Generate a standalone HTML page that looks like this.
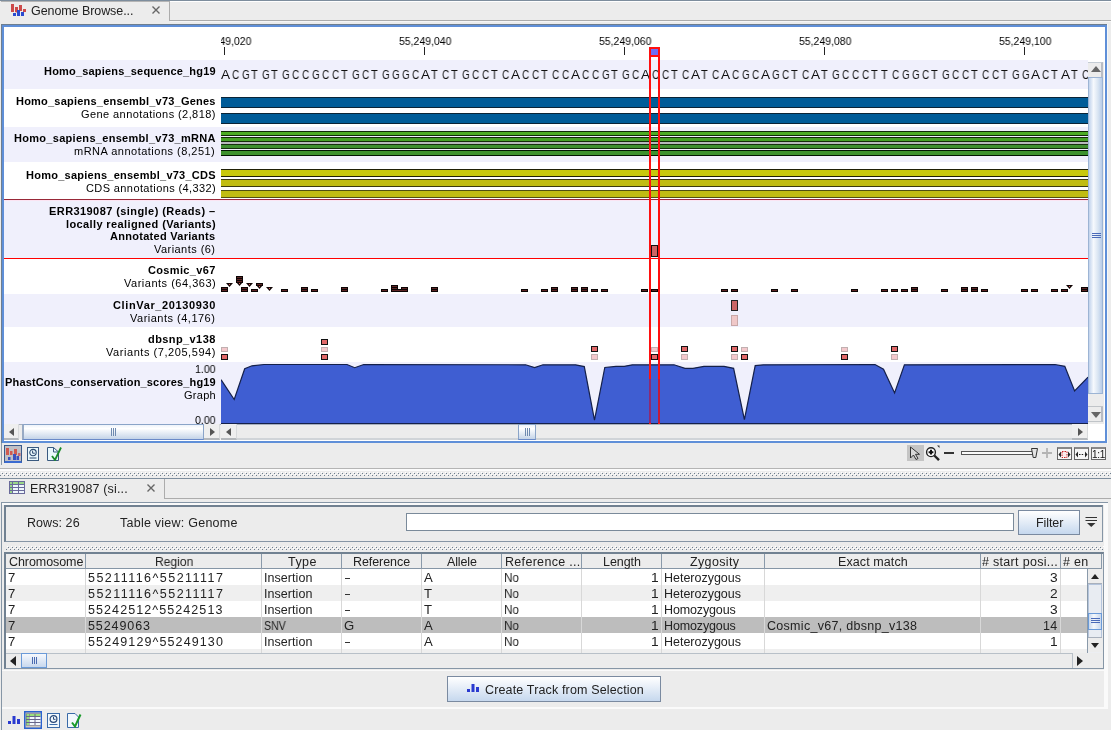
<!DOCTYPE html><html><head><meta charset="utf-8"><style>
html,body{margin:0;padding:0;}
body{width:1111px;height:730px;overflow:hidden;position:relative;background:#ececec;font-family:"Liberation Sans",sans-serif;}
div{position:absolute;box-sizing:border-box;}
.t{white-space:pre;line-height:1;will-change:transform;}
svg{position:absolute;}
</style></head><body>
<div style="left:0px;top:0px;width:1111px;height:1px;background:#7d8d9d;"></div>
<div style="left:1px;top:1px;width:168px;height:1px;background:#b4b4b4;"></div>
<div style="left:169px;top:1px;width:1px;height:20px;background:#acacac;"></div>
<div style="left:170px;top:1px;width:941px;height:1px;background:#ffffff;"></div>
<div style="left:170px;top:20px;width:941px;height:1px;background:#acacac;"></div>
<div style="left:170px;top:21px;width:941px;height:1px;background:#f6f6f6;"></div>
<svg style="left:11px;top:4px" width="15" height="12" viewBox="0 0 15 12">
<rect x="0" y="0" width="3" height="8" fill="#cc4a4a"/>
<path d="M4 3H7V8L5.5 8.5L4 8Z" fill="#cc4a4a"/>
<rect x="8" y="1" width="3" height="6" fill="#cc4a4a"/>
<rect x="12" y="5" width="3" height="3" fill="#cc4a4a"/>
<rect x="2" y="9" width="3" height="3" fill="#2a4ad0"/>
<rect x="6" y="6" width="3" height="6" fill="#2a4ad0"/>
<rect x="10" y="8" width="3" height="4" fill="#2a4ad0"/>
</svg>
<div class="t" style="left:30.8px;top:5.12px;font-size:12.5px;font-weight:normal;color:#222;letter-spacing:-0.074px;">Genome Browse...</div>
<svg style="left:151px;top:5px" width="10" height="10" viewBox="0 0 10 10"><path d="M1.5 1.5L8.5 8.5M8.5 1.5L1.5 8.5" stroke="#666" stroke-width="1.4"/></svg>
<div style="left:1px;top:24px;width:1106px;height:419px;background:#5f8fd8;border-top:1px solid #6e7e8e;border-left:1px solid #6e7e8e;"></div>
<div style="left:4px;top:27px;width:1101px;height:414px;background:#ffffff;"></div>
<div style="left:1107px;top:24px;width:1px;height:420px;background:#f4f8fa;"></div>
<div style="left:4px;top:60px;width:1084px;height:29px;background:#f0f0fc;"></div>
<div style="left:4px;top:89px;width:1084px;height:38px;background:#fff;"></div>
<div style="left:4px;top:127px;width:1084px;height:35px;background:#f0f0fc;"></div>
<div style="left:4px;top:162px;width:1084px;height:37px;background:#fff;"></div>
<div style="left:4px;top:199px;width:1084px;height:60px;background:#f0f0fc;"></div>
<div style="left:4px;top:259px;width:1084px;height:35px;background:#fff;"></div>
<div style="left:4px;top:294px;width:1084px;height:33px;background:#f0f0fc;"></div>
<div style="left:4px;top:327px;width:1084px;height:35px;background:#fff;"></div>
<div style="left:4px;top:362px;width:1084px;height:62px;background:#f0f0fc;"></div>
<div style="left:4px;top:199px;width:1084px;height:1px;background:#982838;"></div>
<div style="left:4px;top:200px;width:1084px;height:1px;background:#fbe4f2;"></div>
<div style="left:4px;top:258px;width:1084px;height:1px;background:#ff0000;"></div>
<div class="t" style="left:43.6px;top:66.49px;font-size:11.0px;font-weight:bold;color:#000;letter-spacing:0.188px;">Homo_sapiens_sequence_hg19</div>
<div class="t" style="left:15.8px;top:95.69px;font-size:11.0px;font-weight:bold;color:#000;letter-spacing:0.213px;">Homo_sapiens_ensembl_v73_Genes</div>
<div class="t" style="left:80.8px;top:109.09px;font-size:11.0px;font-weight:normal;color:#000;letter-spacing:0.419px;">Gene annotations (2,818)</div>
<div class="t" style="left:13.7px;top:133.29px;font-size:11.0px;font-weight:bold;color:#000;letter-spacing:0.296px;">Homo_sapiens_ensembl_v73_mRNA</div>
<div class="t" style="left:74.4px;top:146.39px;font-size:11.0px;font-weight:normal;color:#000;letter-spacing:0.485px;">mRNA annotations (8,251)</div>
<div class="t" style="left:25.6px;top:170.29px;font-size:11.0px;font-weight:bold;color:#000;letter-spacing:0.251px;">Homo_sapiens_ensembl_v73_CDS</div>
<div class="t" style="left:85.5px;top:183.39px;font-size:11.0px;font-weight:normal;color:#000;letter-spacing:0.392px;">CDS annotations (4,332)</div>
<div class="t" style="left:49.1px;top:206.39px;font-size:11.0px;font-weight:bold;color:#000;letter-spacing:0.423px;">ERR319087 (single) (Reads) –</div>
<div class="t" style="left:65.5px;top:218.99px;font-size:11.0px;font-weight:bold;color:#000;letter-spacing:0.382px;">locally realigned (Variants)</div>
<div class="t" style="left:110.1px;top:231.29px;font-size:11.0px;font-weight:bold;color:#000;letter-spacing:0.285px;">Annotated Variants</div>
<div class="t" style="left:154.2px;top:244.09px;font-size:11.0px;font-weight:normal;color:#000;letter-spacing:0.450px;">Variants (6)</div>
<div class="t" style="left:147.9px;top:265.29px;font-size:11.0px;font-weight:bold;color:#000;letter-spacing:0.342px;">Cosmic_v67</div>
<div class="t" style="left:123.5px;top:277.89px;font-size:11.0px;font-weight:normal;color:#000;letter-spacing:0.508px;">Variants (64,363)</div>
<div class="t" style="left:112.7px;top:300.49px;font-size:11.0px;font-weight:bold;color:#000;letter-spacing:0.635px;">ClinVar_20130930</div>
<div class="t" style="left:130.3px;top:313.39px;font-size:11.0px;font-weight:normal;color:#000;letter-spacing:0.496px;">Variants (4,176)</div>
<div class="t" style="left:147.9px;top:333.99px;font-size:11.0px;font-weight:bold;color:#000;letter-spacing:0.412px;">dbsnp_v138</div>
<div class="t" style="left:105.8px;top:347.09px;font-size:11.0px;font-weight:normal;color:#000;letter-spacing:0.555px;">Variants (7,205,594)</div>
<div class="t" style="left:194.6px;top:364.29px;font-size:11.0px;font-weight:normal;color:#000;transform:scaleX(0.9616);transform-origin:0 0;">1.00</div>
<div class="t" style="left:4.5px;top:377.39px;font-size:11.0px;font-weight:bold;color:#000;letter-spacing:0.160px;">PhastCons_conservation_scores_hg19</div>
<div class="t" style="left:183.5px;top:389.99px;font-size:11.0px;font-weight:normal;color:#000;letter-spacing:0.280px;">Graph</div>
<div class="t" style="left:194.6px;top:414.69px;font-size:11.0px;font-weight:normal;color:#000;transform:scaleX(0.9616);transform-origin:0 0;">0.00</div>
<div style="left:221px;top:27px;width:867px;height:33px;overflow:hidden">
<div class="t" style="left:-22.5px;top:9.29px;font-size:11.0px;font-weight:normal;color:#000;transform:scaleX(0.9516);transform-origin:0 0;">55,249,020</div>
<div style="left:3px;top:20px;width:1px;height:8px;background:#222"></div>
<div class="t" style="left:177.5px;top:9.29px;font-size:11.0px;font-weight:normal;color:#000;transform:scaleX(0.9516);transform-origin:0 0;">55,249,040</div>
<div style="left:203px;top:20px;width:1px;height:8px;background:#222"></div>
<div class="t" style="left:377.5px;top:9.29px;font-size:11.0px;font-weight:normal;color:#000;transform:scaleX(0.9516);transform-origin:0 0;">55,249,060</div>
<div style="left:403px;top:20px;width:1px;height:8px;background:#222"></div>
<div class="t" style="left:577.5px;top:9.29px;font-size:11.0px;font-weight:normal;color:#000;transform:scaleX(0.9516);transform-origin:0 0;">55,249,080</div>
<div style="left:603px;top:20px;width:1px;height:8px;background:#222"></div>
<div class="t" style="left:777.5px;top:9.29px;font-size:11.0px;font-weight:normal;color:#000;transform:scaleX(0.9516);transform-origin:0 0;">55,249,100</div>
<div style="left:803px;top:20px;width:1px;height:8px;background:#222"></div>
</div>
<div style="left:221px;top:60px;width:867px;height:29px;overflow:hidden">
<div class="t" style="left:0.2px;top:9.33px;font-size:12.6px;color:#111;transform:scaleX(1.08);transform-origin:0 0">A</div>
<div class="t" style="left:10.9px;top:9.33px;font-size:12.6px;color:#111;transform:scaleX(0.8);transform-origin:0 0">C</div>
<div class="t" style="left:20.9px;top:9.33px;font-size:12.6px;color:#111;transform:scaleX(0.79);transform-origin:0 0">G</div>
<div class="t" style="left:30.0px;top:9.33px;font-size:12.6px;color:#111;transform:scaleX(0.88);transform-origin:0 0">T</div>
<div class="t" style="left:40.9px;top:9.33px;font-size:12.6px;color:#111;transform:scaleX(0.79);transform-origin:0 0">G</div>
<div class="t" style="left:50.0px;top:9.33px;font-size:12.6px;color:#111;transform:scaleX(0.88);transform-origin:0 0">T</div>
<div class="t" style="left:60.9px;top:9.33px;font-size:12.6px;color:#111;transform:scaleX(0.79);transform-origin:0 0">G</div>
<div class="t" style="left:70.9px;top:9.33px;font-size:12.6px;color:#111;transform:scaleX(0.8);transform-origin:0 0">C</div>
<div class="t" style="left:80.9px;top:9.33px;font-size:12.6px;color:#111;transform:scaleX(0.8);transform-origin:0 0">C</div>
<div class="t" style="left:90.9px;top:9.33px;font-size:12.6px;color:#111;transform:scaleX(0.79);transform-origin:0 0">G</div>
<div class="t" style="left:100.9px;top:9.33px;font-size:12.6px;color:#111;transform:scaleX(0.8);transform-origin:0 0">C</div>
<div class="t" style="left:110.9px;top:9.33px;font-size:12.6px;color:#111;transform:scaleX(0.8);transform-origin:0 0">C</div>
<div class="t" style="left:120.0px;top:9.33px;font-size:12.6px;color:#111;transform:scaleX(0.88);transform-origin:0 0">T</div>
<div class="t" style="left:130.9px;top:9.33px;font-size:12.6px;color:#111;transform:scaleX(0.79);transform-origin:0 0">G</div>
<div class="t" style="left:140.9px;top:9.33px;font-size:12.6px;color:#111;transform:scaleX(0.8);transform-origin:0 0">C</div>
<div class="t" style="left:150.0px;top:9.33px;font-size:12.6px;color:#111;transform:scaleX(0.88);transform-origin:0 0">T</div>
<div class="t" style="left:160.9px;top:9.33px;font-size:12.6px;color:#111;transform:scaleX(0.79);transform-origin:0 0">G</div>
<div class="t" style="left:170.9px;top:9.33px;font-size:12.6px;color:#111;transform:scaleX(0.79);transform-origin:0 0">G</div>
<div class="t" style="left:180.9px;top:9.33px;font-size:12.6px;color:#111;transform:scaleX(0.79);transform-origin:0 0">G</div>
<div class="t" style="left:190.9px;top:9.33px;font-size:12.6px;color:#111;transform:scaleX(0.8);transform-origin:0 0">C</div>
<div class="t" style="left:200.2px;top:9.33px;font-size:12.6px;color:#111;transform:scaleX(1.08);transform-origin:0 0">A</div>
<div class="t" style="left:210.0px;top:9.33px;font-size:12.6px;color:#111;transform:scaleX(0.88);transform-origin:0 0">T</div>
<div class="t" style="left:220.9px;top:9.33px;font-size:12.6px;color:#111;transform:scaleX(0.8);transform-origin:0 0">C</div>
<div class="t" style="left:230.0px;top:9.33px;font-size:12.6px;color:#111;transform:scaleX(0.88);transform-origin:0 0">T</div>
<div class="t" style="left:240.9px;top:9.33px;font-size:12.6px;color:#111;transform:scaleX(0.79);transform-origin:0 0">G</div>
<div class="t" style="left:250.9px;top:9.33px;font-size:12.6px;color:#111;transform:scaleX(0.8);transform-origin:0 0">C</div>
<div class="t" style="left:260.9px;top:9.33px;font-size:12.6px;color:#111;transform:scaleX(0.8);transform-origin:0 0">C</div>
<div class="t" style="left:270.0px;top:9.33px;font-size:12.6px;color:#111;transform:scaleX(0.88);transform-origin:0 0">T</div>
<div class="t" style="left:280.9px;top:9.33px;font-size:12.6px;color:#111;transform:scaleX(0.8);transform-origin:0 0">C</div>
<div class="t" style="left:290.2px;top:9.33px;font-size:12.6px;color:#111;transform:scaleX(1.08);transform-origin:0 0">A</div>
<div class="t" style="left:300.9px;top:9.33px;font-size:12.6px;color:#111;transform:scaleX(0.8);transform-origin:0 0">C</div>
<div class="t" style="left:310.9px;top:9.33px;font-size:12.6px;color:#111;transform:scaleX(0.8);transform-origin:0 0">C</div>
<div class="t" style="left:320.0px;top:9.33px;font-size:12.6px;color:#111;transform:scaleX(0.88);transform-origin:0 0">T</div>
<div class="t" style="left:330.9px;top:9.33px;font-size:12.6px;color:#111;transform:scaleX(0.8);transform-origin:0 0">C</div>
<div class="t" style="left:340.9px;top:9.33px;font-size:12.6px;color:#111;transform:scaleX(0.8);transform-origin:0 0">C</div>
<div class="t" style="left:350.2px;top:9.33px;font-size:12.6px;color:#111;transform:scaleX(1.08);transform-origin:0 0">A</div>
<div class="t" style="left:360.9px;top:9.33px;font-size:12.6px;color:#111;transform:scaleX(0.8);transform-origin:0 0">C</div>
<div class="t" style="left:370.9px;top:9.33px;font-size:12.6px;color:#111;transform:scaleX(0.8);transform-origin:0 0">C</div>
<div class="t" style="left:380.9px;top:9.33px;font-size:12.6px;color:#111;transform:scaleX(0.79);transform-origin:0 0">G</div>
<div class="t" style="left:390.0px;top:9.33px;font-size:12.6px;color:#111;transform:scaleX(0.88);transform-origin:0 0">T</div>
<div class="t" style="left:400.9px;top:9.33px;font-size:12.6px;color:#111;transform:scaleX(0.79);transform-origin:0 0">G</div>
<div class="t" style="left:410.9px;top:9.33px;font-size:12.6px;color:#111;transform:scaleX(0.8);transform-origin:0 0">C</div>
<div class="t" style="left:420.2px;top:9.33px;font-size:12.6px;color:#111;transform:scaleX(1.08);transform-origin:0 0">A</div>
<div class="t" style="left:430.9px;top:9.33px;font-size:12.6px;color:#111;transform:scaleX(0.8);transform-origin:0 0">C</div>
<div class="t" style="left:440.9px;top:9.33px;font-size:12.6px;color:#111;transform:scaleX(0.8);transform-origin:0 0">C</div>
<div class="t" style="left:450.0px;top:9.33px;font-size:12.6px;color:#111;transform:scaleX(0.88);transform-origin:0 0">T</div>
<div class="t" style="left:460.9px;top:9.33px;font-size:12.6px;color:#111;transform:scaleX(0.8);transform-origin:0 0">C</div>
<div class="t" style="left:470.2px;top:9.33px;font-size:12.6px;color:#111;transform:scaleX(1.08);transform-origin:0 0">A</div>
<div class="t" style="left:480.0px;top:9.33px;font-size:12.6px;color:#111;transform:scaleX(0.88);transform-origin:0 0">T</div>
<div class="t" style="left:490.9px;top:9.33px;font-size:12.6px;color:#111;transform:scaleX(0.8);transform-origin:0 0">C</div>
<div class="t" style="left:500.2px;top:9.33px;font-size:12.6px;color:#111;transform:scaleX(1.08);transform-origin:0 0">A</div>
<div class="t" style="left:510.9px;top:9.33px;font-size:12.6px;color:#111;transform:scaleX(0.8);transform-origin:0 0">C</div>
<div class="t" style="left:520.9px;top:9.33px;font-size:12.6px;color:#111;transform:scaleX(0.79);transform-origin:0 0">G</div>
<div class="t" style="left:530.9px;top:9.33px;font-size:12.6px;color:#111;transform:scaleX(0.8);transform-origin:0 0">C</div>
<div class="t" style="left:540.2px;top:9.33px;font-size:12.6px;color:#111;transform:scaleX(1.08);transform-origin:0 0">A</div>
<div class="t" style="left:550.9px;top:9.33px;font-size:12.6px;color:#111;transform:scaleX(0.79);transform-origin:0 0">G</div>
<div class="t" style="left:560.9px;top:9.33px;font-size:12.6px;color:#111;transform:scaleX(0.8);transform-origin:0 0">C</div>
<div class="t" style="left:570.0px;top:9.33px;font-size:12.6px;color:#111;transform:scaleX(0.88);transform-origin:0 0">T</div>
<div class="t" style="left:580.9px;top:9.33px;font-size:12.6px;color:#111;transform:scaleX(0.8);transform-origin:0 0">C</div>
<div class="t" style="left:590.2px;top:9.33px;font-size:12.6px;color:#111;transform:scaleX(1.08);transform-origin:0 0">A</div>
<div class="t" style="left:600.0px;top:9.33px;font-size:12.6px;color:#111;transform:scaleX(0.88);transform-origin:0 0">T</div>
<div class="t" style="left:610.9px;top:9.33px;font-size:12.6px;color:#111;transform:scaleX(0.79);transform-origin:0 0">G</div>
<div class="t" style="left:620.9px;top:9.33px;font-size:12.6px;color:#111;transform:scaleX(0.8);transform-origin:0 0">C</div>
<div class="t" style="left:630.9px;top:9.33px;font-size:12.6px;color:#111;transform:scaleX(0.8);transform-origin:0 0">C</div>
<div class="t" style="left:640.9px;top:9.33px;font-size:12.6px;color:#111;transform:scaleX(0.8);transform-origin:0 0">C</div>
<div class="t" style="left:650.0px;top:9.33px;font-size:12.6px;color:#111;transform:scaleX(0.88);transform-origin:0 0">T</div>
<div class="t" style="left:660.0px;top:9.33px;font-size:12.6px;color:#111;transform:scaleX(0.88);transform-origin:0 0">T</div>
<div class="t" style="left:670.9px;top:9.33px;font-size:12.6px;color:#111;transform:scaleX(0.8);transform-origin:0 0">C</div>
<div class="t" style="left:680.9px;top:9.33px;font-size:12.6px;color:#111;transform:scaleX(0.79);transform-origin:0 0">G</div>
<div class="t" style="left:690.9px;top:9.33px;font-size:12.6px;color:#111;transform:scaleX(0.79);transform-origin:0 0">G</div>
<div class="t" style="left:700.9px;top:9.33px;font-size:12.6px;color:#111;transform:scaleX(0.8);transform-origin:0 0">C</div>
<div class="t" style="left:710.0px;top:9.33px;font-size:12.6px;color:#111;transform:scaleX(0.88);transform-origin:0 0">T</div>
<div class="t" style="left:720.9px;top:9.33px;font-size:12.6px;color:#111;transform:scaleX(0.79);transform-origin:0 0">G</div>
<div class="t" style="left:730.9px;top:9.33px;font-size:12.6px;color:#111;transform:scaleX(0.8);transform-origin:0 0">C</div>
<div class="t" style="left:740.9px;top:9.33px;font-size:12.6px;color:#111;transform:scaleX(0.8);transform-origin:0 0">C</div>
<div class="t" style="left:750.0px;top:9.33px;font-size:12.6px;color:#111;transform:scaleX(0.88);transform-origin:0 0">T</div>
<div class="t" style="left:760.9px;top:9.33px;font-size:12.6px;color:#111;transform:scaleX(0.8);transform-origin:0 0">C</div>
<div class="t" style="left:770.9px;top:9.33px;font-size:12.6px;color:#111;transform:scaleX(0.8);transform-origin:0 0">C</div>
<div class="t" style="left:780.0px;top:9.33px;font-size:12.6px;color:#111;transform:scaleX(0.88);transform-origin:0 0">T</div>
<div class="t" style="left:790.9px;top:9.33px;font-size:12.6px;color:#111;transform:scaleX(0.79);transform-origin:0 0">G</div>
<div class="t" style="left:800.9px;top:9.33px;font-size:12.6px;color:#111;transform:scaleX(0.79);transform-origin:0 0">G</div>
<div class="t" style="left:810.2px;top:9.33px;font-size:12.6px;color:#111;transform:scaleX(1.08);transform-origin:0 0">A</div>
<div class="t" style="left:820.9px;top:9.33px;font-size:12.6px;color:#111;transform:scaleX(0.8);transform-origin:0 0">C</div>
<div class="t" style="left:830.0px;top:9.33px;font-size:12.6px;color:#111;transform:scaleX(0.88);transform-origin:0 0">T</div>
<div class="t" style="left:840.2px;top:9.33px;font-size:12.6px;color:#111;transform:scaleX(1.08);transform-origin:0 0">A</div>
<div class="t" style="left:850.0px;top:9.33px;font-size:12.6px;color:#111;transform:scaleX(0.88);transform-origin:0 0">T</div>
<div class="t" style="left:860.9px;top:9.33px;font-size:12.6px;color:#111;transform:scaleX(0.8);transform-origin:0 0">C</div>
</div>
<div style="left:221px;top:97px;width:867px;height:11px;background:#005c98;border-top:1px solid #0b2436;border-bottom:1px solid #0b2436;"></div>
<div style="left:221px;top:113px;width:867px;height:11px;background:#005c98;border-top:1px solid #0b2436;border-bottom:1px solid #0b2436;"></div>
<div style="left:221px;top:131px;width:867px;height:5px;background:#4cac24;border-top:1px solid #102a08;border-bottom:1px solid #102a08;"></div>
<div style="left:221px;top:137px;width:867px;height:5px;background:#46a026;border-top:1px solid #142a0a;border-bottom:1px solid #142a0a;"></div>
<div style="left:221px;top:142px;width:867px;height:2px;background:#b8b8bc;"></div>
<div style="left:221px;top:144px;width:867px;height:5px;background:#3e8e2e;border-top:1px solid #16300e;border-bottom:1px solid #16300e;"></div>
<div style="left:221px;top:150px;width:867px;height:6px;background:#3e922e;border-top:1px solid #021602;border-bottom:1px solid #021602;"></div>
<div style="left:221px;top:169px;width:867px;height:8px;background:#c8c80c;border-top:1px solid #202006;border-bottom:1px solid #202006;"></div>
<div style="left:221px;top:179px;width:867px;height:8px;background:#c0bc12;border-top:1px solid #3a3a10;border-bottom:1px solid #3a3a10;"></div>
<div style="left:221px;top:190px;width:867px;height:8px;background:#c0bc12;border-top:1px solid #505010;border-bottom:1px solid #505010;"></div>
<div style="left:651px;top:245px;width:7px;height:12px;background:#cc6464;border:1px solid #111;"></div>
<div style="left:221px;top:287px;width:7px;height:3px;background:#5e2424;border:1px solid #0a0404;"></div>
<div style="left:221px;top:289px;width:7px;height:3px;background:#5e2424;border:1px solid #0a0404;"></div>
<div style="left:241px;top:287px;width:7px;height:3px;background:#5e2424;border:1px solid #0a0404;"></div>
<div style="left:241px;top:289px;width:7px;height:3px;background:#5e2424;border:1px solid #0a0404;"></div>
<div style="left:301px;top:287px;width:7px;height:3px;background:#5e2424;border:1px solid #0a0404;"></div>
<div style="left:301px;top:289px;width:7px;height:3px;background:#5e2424;border:1px solid #0a0404;"></div>
<div style="left:341px;top:287px;width:7px;height:3px;background:#5e2424;border:1px solid #0a0404;"></div>
<div style="left:341px;top:289px;width:7px;height:3px;background:#5e2424;border:1px solid #0a0404;"></div>
<div style="left:431px;top:287px;width:7px;height:3px;background:#5e2424;border:1px solid #0a0404;"></div>
<div style="left:431px;top:289px;width:7px;height:3px;background:#5e2424;border:1px solid #0a0404;"></div>
<div style="left:551px;top:287px;width:7px;height:3px;background:#5e2424;border:1px solid #0a0404;"></div>
<div style="left:551px;top:289px;width:7px;height:3px;background:#5e2424;border:1px solid #0a0404;"></div>
<div style="left:571px;top:287px;width:7px;height:3px;background:#5e2424;border:1px solid #0a0404;"></div>
<div style="left:571px;top:289px;width:7px;height:3px;background:#5e2424;border:1px solid #0a0404;"></div>
<div style="left:581px;top:287px;width:7px;height:3px;background:#5e2424;border:1px solid #0a0404;"></div>
<div style="left:581px;top:289px;width:7px;height:3px;background:#5e2424;border:1px solid #0a0404;"></div>
<div style="left:911px;top:287px;width:7px;height:3px;background:#5e2424;border:1px solid #0a0404;"></div>
<div style="left:911px;top:289px;width:7px;height:3px;background:#5e2424;border:1px solid #0a0404;"></div>
<div style="left:961px;top:287px;width:7px;height:3px;background:#5e2424;border:1px solid #0a0404;"></div>
<div style="left:961px;top:289px;width:7px;height:3px;background:#5e2424;border:1px solid #0a0404;"></div>
<div style="left:971px;top:287px;width:7px;height:3px;background:#5e2424;border:1px solid #0a0404;"></div>
<div style="left:971px;top:289px;width:7px;height:3px;background:#5e2424;border:1px solid #0a0404;"></div>
<div style="left:1081px;top:287px;width:7px;height:3px;background:#5e2424;border:1px solid #0a0404;"></div>
<div style="left:1081px;top:289px;width:7px;height:3px;background:#5e2424;border:1px solid #0a0404;"></div>
<div style="left:251px;top:289px;width:7px;height:3px;background:#5e2424;border:1px solid #0a0404;"></div>
<div style="left:281px;top:289px;width:7px;height:3px;background:#5e2424;border:1px solid #0a0404;"></div>
<div style="left:311px;top:289px;width:7px;height:3px;background:#5e2424;border:1px solid #0a0404;"></div>
<div style="left:381px;top:289px;width:7px;height:3px;background:#5e2424;border:1px solid #0a0404;"></div>
<div style="left:521px;top:289px;width:7px;height:3px;background:#5e2424;border:1px solid #0a0404;"></div>
<div style="left:541px;top:289px;width:7px;height:3px;background:#5e2424;border:1px solid #0a0404;"></div>
<div style="left:591px;top:289px;width:7px;height:3px;background:#5e2424;border:1px solid #0a0404;"></div>
<div style="left:601px;top:289px;width:7px;height:3px;background:#5e2424;border:1px solid #0a0404;"></div>
<div style="left:641px;top:289px;width:7px;height:3px;background:#5e2424;border:1px solid #0a0404;"></div>
<div style="left:651px;top:289px;width:7px;height:3px;background:#5e2424;border:1px solid #0a0404;"></div>
<div style="left:721px;top:289px;width:7px;height:3px;background:#5e2424;border:1px solid #0a0404;"></div>
<div style="left:731px;top:289px;width:7px;height:3px;background:#5e2424;border:1px solid #0a0404;"></div>
<div style="left:771px;top:289px;width:7px;height:3px;background:#5e2424;border:1px solid #0a0404;"></div>
<div style="left:791px;top:289px;width:7px;height:3px;background:#5e2424;border:1px solid #0a0404;"></div>
<div style="left:851px;top:289px;width:7px;height:3px;background:#5e2424;border:1px solid #0a0404;"></div>
<div style="left:881px;top:289px;width:7px;height:3px;background:#5e2424;border:1px solid #0a0404;"></div>
<div style="left:891px;top:289px;width:7px;height:3px;background:#5e2424;border:1px solid #0a0404;"></div>
<div style="left:901px;top:289px;width:7px;height:3px;background:#5e2424;border:1px solid #0a0404;"></div>
<div style="left:941px;top:289px;width:7px;height:3px;background:#5e2424;border:1px solid #0a0404;"></div>
<div style="left:981px;top:289px;width:7px;height:3px;background:#5e2424;border:1px solid #0a0404;"></div>
<div style="left:1021px;top:289px;width:7px;height:3px;background:#5e2424;border:1px solid #0a0404;"></div>
<div style="left:1031px;top:289px;width:7px;height:3px;background:#5e2424;border:1px solid #0a0404;"></div>
<div style="left:1051px;top:289px;width:7px;height:3px;background:#5e2424;border:1px solid #0a0404;"></div>
<div style="left:1061px;top:289px;width:7px;height:3px;background:#5e2424;border:1px solid #0a0404;"></div>
<div style="left:391px;top:285px;width:7px;height:3px;background:#5e2424;border:1px solid #0a0404;"></div>
<div style="left:391px;top:287px;width:7px;height:3px;background:#5e2424;border:1px solid #0a0404;"></div>
<div style="left:391px;top:289px;width:17px;height:3px;background:#5e2424;border:1px solid #0a0404;"></div>
<div style="left:401px;top:287px;width:7px;height:3px;background:#5e2424;border:1px solid #0a0404;"></div>
<div style="left:236px;top:276px;width:7px;height:3px;background:#5e2424;border:1px solid #0a0404;"></div>
<div style="left:236px;top:278px;width:7px;height:3px;background:#5e2424;border:1px solid #0a0404;"></div>
<div style="left:236px;top:280px;width:7px;height:3px;background:#5e2424;border:1px solid #0a0404;"></div>
<svg style="left:236px;top:282px" width="7" height="4" viewBox="0 0 7 4"><path d="M0 0H7L3.5 4Z" fill="#120606"/><rect x="3" y="1" width="1" height="1" fill="#d05858"/></svg>
<div style="left:256px;top:283px;width:7px;height:3px;background:#5e2424;border:1px solid #0a0404;"></div>
<svg style="left:256px;top:285px" width="7" height="4" viewBox="0 0 7 4"><path d="M0 0H7L3.5 4Z" fill="#120606"/><rect x="3" y="1" width="1" height="1" fill="#d05858"/></svg>
<svg style="left:226px;top:283px" width="7" height="4" viewBox="0 0 7 4"><path d="M0 0H7L3.5 4Z" fill="#120606"/><rect x="3" y="1" width="1" height="1" fill="#d05858"/></svg>
<svg style="left:246px;top:283px" width="7" height="4" viewBox="0 0 7 4"><path d="M0 0H7L3.5 4Z" fill="#120606"/><rect x="3" y="1" width="1" height="1" fill="#d05858"/></svg>
<svg style="left:266px;top:287px" width="7" height="4" viewBox="0 0 7 4"><path d="M0 0H7L3.5 4Z" fill="#120606"/><rect x="3" y="1" width="1" height="1" fill="#d05858"/></svg>
<svg style="left:1066px;top:285px" width="7" height="4" viewBox="0 0 7 4"><path d="M0 0H7L3.5 4Z" fill="#120606"/><rect x="3" y="1" width="1" height="1" fill="#d05858"/></svg>
<div style="left:731px;top:300px;width:7px;height:11px;background:#cc6666;border:1px solid #222;"></div>
<div style="left:731px;top:315px;width:7px;height:11px;background:#f0c8c8;border:1px solid #c8a8a8;"></div>
<div style="left:221px;top:347px;width:7px;height:5px;background:#f4c8cc;border:1px solid #c0b0b0;"></div>
<div style="left:221px;top:354px;width:7px;height:6px;background:#e06868;border:1px solid #111;"></div>
<div style="left:321px;top:339px;width:7px;height:6px;background:#e06868;border:1px solid #111;"></div>
<div style="left:321px;top:347px;width:7px;height:5px;background:#f4c8cc;border:1px solid #c0b0b0;"></div>
<div style="left:321px;top:354px;width:7px;height:6px;background:#e06868;border:1px solid #111;"></div>
<div style="left:591px;top:346px;width:7px;height:6px;background:#e06868;border:1px solid #111;"></div>
<div style="left:591px;top:354px;width:7px;height:6px;background:#f4c8cc;border:1px solid #c0b0b0;"></div>
<div style="left:651px;top:347px;width:7px;height:5px;background:#f4c8cc;border:1px solid #c0b0b0;"></div>
<div style="left:651px;top:354px;width:7px;height:6px;background:#e06868;border:1px solid #111;"></div>
<div style="left:681px;top:346px;width:7px;height:6px;background:#e06868;border:1px solid #111;"></div>
<div style="left:681px;top:354px;width:7px;height:6px;background:#f4c8cc;border:1px solid #c0b0b0;"></div>
<div style="left:731px;top:346px;width:7px;height:6px;background:#e06868;border:1px solid #111;"></div>
<div style="left:731px;top:354px;width:7px;height:6px;background:#f4c8cc;border:1px solid #c0b0b0;"></div>
<div style="left:741px;top:347px;width:7px;height:5px;background:#f4c8cc;border:1px solid #c0b0b0;"></div>
<div style="left:741px;top:354px;width:7px;height:6px;background:#e06868;border:1px solid #111;"></div>
<div style="left:841px;top:347px;width:7px;height:5px;background:#f4c8cc;border:1px solid #c0b0b0;"></div>
<div style="left:841px;top:354px;width:7px;height:6px;background:#e06868;border:1px solid #111;"></div>
<div style="left:891px;top:346px;width:7px;height:6px;background:#e06868;border:1px solid #111;"></div>
<div style="left:891px;top:354px;width:7px;height:6px;background:#f4c8cc;border:1px solid #c0b0b0;"></div>
<svg style="left:221px;top:362px" width="867" height="62" viewBox="0 0 867 62"><path d="M0,62 L0.0,17.7 13.2,37.5 23.7,6.7 31.0,3.8 43.0,2.5 126.0,2.5 133.7,5.7 142.7,2.5 304.6,2.8 313.6,5.5 322.0,2.8 354.6,2.8 363.3,4.6 373.5,58.1 383.8,5.5 395.0,4.3 403.2,4.3 411.3,2.8 453.0,2.8 464.0,6.3 472.0,6.3 483.0,4.3 503.0,4.3 512.6,6.3 523.4,57.6 534.2,3.6 542.3,2.8 654.0,2.5 662.5,7.3 673.6,31.0 683.4,2.8 834.0,2.5 843.8,4.3 853.6,29.0 867.0,15.1 L867,62 Z" fill="#3f5ed2"/><polyline points="0.0,17.7 13.2,37.5 23.7,6.7 31.0,3.8 43.0,2.5 126.0,2.5 133.7,5.7 142.7,2.5 304.6,2.8 313.6,5.5 322.0,2.8 354.6,2.8 363.3,4.6 373.5,58.1 383.8,5.5 395.0,4.3 403.2,4.3 411.3,2.8 453.0,2.8 464.0,6.3 472.0,6.3 483.0,4.3 503.0,4.3 512.6,6.3 523.4,57.6 534.2,3.6 542.3,2.8 654.0,2.5 662.5,7.3 673.6,31.0 683.4,2.8 834.0,2.5 843.8,4.3 853.6,29.0 867.0,15.1" fill="none" stroke="#14204a" stroke-width="1.2"/><rect x="0" y="61" width="867" height="1" fill="#14204a"/></svg>
<div style="left:649px;top:47px;width:11px;height:377px;background:transparent;border:2px solid #ff1010;border-bottom:none;"></div>
<div style="left:651px;top:49px;width:7px;height:6px;background:#6f6ff6;"></div>
<div style="left:649px;top:55px;width:11px;height:2px;background:#ff1010;"></div>
<div style="left:649px;top:379px;width:2px;height:44px;background:#8e2a72;"></div>
<div style="left:658px;top:379px;width:2px;height:44px;background:#c41a3a;"></div>
<div style="left:1088px;top:60px;width:16px;height:2px;background:#ffffff;"></div>
<div style="left:1088px;top:62px;width:16px;height:362px;background:#ececec;"></div>
<div style="left:1088px;top:62px;width:15px;height:15px;background:#ececec;border-top:1px solid #c4ccd4;border-right:2px solid #b8bcc4;"></div>
<svg style="left:1091px;top:66px" width="10" height="6"><path d="M0 6L5 0L10 6Z" fill="#666"/></svg>
<div style="left:1088px;top:77px;width:15px;height:317px;background:#e4ecf6;border:1px solid #9cb4d4;background:linear-gradient(90deg,#c0d2ec,#f6f9fd 35%,#d8e4f2 70%,#b8cce8);"></div>
<div style="left:1092px;top:233px;width:9px;height:1px;background:#4a6ab8;"></div>
<div style="left:1092px;top:235px;width:9px;height:1px;background:#4a6ab8;"></div>
<div style="left:1092px;top:237px;width:9px;height:1px;background:#4a6ab8;"></div>
<div style="left:1088px;top:406px;width:15px;height:1px;background:#c0c4c8;"></div>
<div style="left:1088px;top:407px;width:15px;height:15px;background:#ececec;border-bottom:1px solid #c0c4c8;border-right:2px solid #b8bcc4;"></div>
<svg style="left:1091px;top:412px" width="10" height="6"><path d="M0 0L5 6L10 0Z" fill="#666"/></svg>
<div style="left:4px;top:424px;width:1084px;height:16px;background:#ececec;"></div>
<div style="left:4px;top:424px;width:1084px;height:1px;background:#a8b0bc;"></div>
<div style="left:4px;top:439px;width:1084px;height:1px;background:#f4f4f4;"></div>
<div style="left:4px;top:424px;width:15px;height:16px;background:#efefef;border-bottom:2px solid #b4b8bc;border-right:1px solid #d8dadc;"></div>
<svg style="left:9px;top:428px" width="5" height="8"><path d="M5 0L0 4L5 8Z" fill="#555"/></svg>
<div style="left:22px;top:424px;width:182px;height:16px;background:#e6eef8;border:1px solid #8aa4c8;border-left:2px solid #98aac4;border-bottom:1px solid #6a8ac8;background:linear-gradient(180deg,#eef3fa 0%,#ffffff 25%,#c4d4e8 100%);"></div>
<div style="left:111px;top:428px;width:1px;height:8px;background:#6e8ab0;"></div>
<div style="left:113px;top:428px;width:1px;height:8px;background:#6e8ab0;"></div>
<div style="left:115px;top:428px;width:1px;height:8px;background:#6e8ab0;"></div>
<div style="left:204px;top:424px;width:16px;height:16px;background:#efefef;border-bottom:2px solid #b4b8bc;border-right:1px solid #d8dadc;"></div>
<svg style="left:210px;top:428px" width="5" height="8"><path d="M0 0L5 4L0 8Z" fill="#555"/></svg>
<div style="left:221px;top:424px;width:16px;height:16px;background:#efefef;border-bottom:2px solid #b4b8bc;border-right:1px solid #d8dadc;"></div>
<svg style="left:226px;top:428px" width="5" height="8"><path d="M5 0L0 4L5 8Z" fill="#555"/></svg>
<div style="left:237px;top:424px;width:835px;height:16px;background:#ececec;border-top:1px solid #a8b0bc;border-bottom:2px solid #d0d4d8;"></div>
<div style="left:518px;top:424px;width:18px;height:16px;background:#e6eef8;border:1px solid #8aa4c8;border-bottom:1px solid #6a8ac8;background:linear-gradient(180deg,#eef3fa 0%,#ffffff 25%,#c4d4e8 100%);"></div>
<div style="left:525px;top:428px;width:1px;height:8px;background:#6e8ab0;"></div>
<div style="left:527px;top:428px;width:1px;height:8px;background:#6e8ab0;"></div>
<div style="left:529px;top:428px;width:1px;height:8px;background:#6e8ab0;"></div>
<div style="left:1072px;top:424px;width:16px;height:16px;background:#efefef;border-bottom:2px solid #b4b8bc;border-right:1px solid #d8dadc;"></div>
<svg style="left:1078px;top:428px" width="5" height="8"><path d="M0 0L5 4L0 8Z" fill="#555"/></svg>
<div style="left:1088px;top:424px;width:17px;height:17px;background:#ffffff;"></div>
<div style="left:1px;top:443px;width:1px;height:22px;background:#8a9aaa;"></div>
<div style="left:4px;top:445px;width:18px;height:18px;background:#c0c0c6;border:1px solid #3a5a8a;border-bottom:2px solid #3a6ad0;"></div>
<svg style="left:5px;top:446px" width="16" height="15" viewBox="0 0 16 15">
<rect x="1" y="2" width="3" height="7" fill="#d05a50"/><rect x="5" y="5" width="2.5" height="4" fill="#d05a50"/>
<rect x="9" y="3" width="3" height="6" fill="#d05a50"/><rect x="13" y="7" width="2.5" height="3" fill="#c86a70"/>
<rect x="3" y="11" width="2.5" height="3" fill="#3a52c0"/><rect x="8" y="8" width="3" height="6" fill="#3a52c0"/><rect x="11.5" y="10" width="2.5" height="4" fill="#3a52c0"/></svg>
<svg style="left:27px;top:447px" width="12" height="14" viewBox="0 0 12 14">
<rect x="0.5" y="0.5" width="11" height="13" fill="#eaf8fc" stroke="#3a5a80"/>
<circle cx="6" cy="5.6" r="3.2" fill="none" stroke="#2a4a70" stroke-width="1.1"/><path d="M5.6 3.6V6.2H7.8" stroke="#2a4a70" fill="none"/>
<rect x="2.5" y="10.5" width="7" height="1" fill="#2a4a70"/></svg>
<svg style="left:47px;top:447px" width="15" height="14" viewBox="0 0 15 14">
<path d="M0.5 0.5H6.5L11.5 5V13.5H0.5Z" fill="#eaf8fc" stroke="#3a5a80"/>
<path d="M6.5 0.5V5H11.5" fill="none" stroke="#3a5a80"/>
<path d="M5 9L8 13L14 0.5" stroke="#1a8a2a" stroke-width="1.8" fill="none"/></svg>
<div style="left:907px;top:445px;width:17px;height:16px;background:#c4c4c4;"></div>
<svg style="left:909px;top:446px" width="13" height="14" viewBox="0 0 13 14"><path d="M1.5 1V12L4.5 9L7 13.5L9 12.5L6.5 8.3H10.5Z" fill="#d8d8d8" stroke="#333" stroke-width="1"/></svg>
<svg style="left:925px;top:445px" width="16" height="17" viewBox="0 0 16 17"><circle cx="6" cy="7.2" r="4.4" fill="#fff" stroke="#222" stroke-width="1.4"/><path d="M3.6 7.2H8.4M6 4.8V9.6" stroke="#111" stroke-width="2"/><path d="M9.3 10.5L14 15.2" stroke="#222" stroke-width="2.4"/><path d="M12 0.5H14.5V3Z" fill="#333"/></svg>
<div style="left:944px;top:452px;width:10px;height:2px;background:#333;"></div>
<div style="left:961px;top:451px;width:73px;height:4px;background:#fafafa;border:1px solid #555;"></div>
<svg style="left:1031px;top:448px" width="7" height="10" viewBox="0 0 7 10"><path d="M0.5 0.5H6.5L4.8 9.5H2.2Z" fill="#e4e4e4" stroke="#333"/></svg>
<svg style="left:1042px;top:448px" width="10" height="10"><path d="M5 0V10M0 5H10" stroke="#b4b4b4" stroke-width="1.8"/></svg>
<div style="left:1057px;top:447px;width:15px;height:13px;background:#f6f6f6;border:1px solid #666;border-top:2px solid #888;"></div>
<div style="left:1074px;top:447px;width:15px;height:13px;background:#f6f6f6;border:1px solid #666;border-top:2px solid #888;"></div>
<div style="left:1091px;top:447px;width:15px;height:13px;background:#f6f6f6;border:1px solid #666;border-top:2px solid #888;"></div>
<svg style="left:1058px;top:450px" width="13" height="9" viewBox="0 0 13 9"><path d="M0.5 4.5L3 1.5V7.5Z M12.5 4.5L10 1.5V7.5Z" fill="#222"/><rect x="4" y="1.5" width="5" height="6" fill="#fbeaea" stroke="#cc2222" stroke-dasharray="1.5 1"/></svg>
<svg style="left:1075px;top:450px" width="13" height="9" viewBox="0 0 13 9"><path d="M0.5 4.5L3 1.5V7.5Z M12.5 4.5L10 1.5V7.5Z" fill="#222"/><path d="M4 4.5H9.5" stroke="#222" stroke-dasharray="1.5 1.2"/></svg>
<div class="t" style="left:1092px;top:450px;font-size:10px;color:#111;width:13px;text-align:center;letter-spacing:-0.3px">1:1</div>
<svg style="left:0;top:0;width:0;height:0"><defs><pattern id="dots" width="4" height="4" patternUnits="userSpaceOnUse"><rect x="1" y="0" width="1" height="1" fill="#ffffff"/><rect x="2" y="1" width="1" height="1" fill="#6e7e8e"/><rect x="3" y="2" width="1" height="1" fill="#ffffff"/><rect x="0" y="3" width="1" height="1" fill="#6e7e8e"/></pattern></defs></svg>
<div style="left:0px;top:468px;width:1111px;height:1px;background:#b4b4b4;"></div>
<div style="left:0px;top:469px;width:1111px;height:2px;background:#fbfbfb;"></div>
<svg style="left:0;top:472px" width="1111" height="4"><rect width="1111" height="4" fill="url(#dots)"/></svg>
<div style="left:0px;top:478px;width:1111px;height:1px;background:#7d8d9d;"></div>
<div style="left:164px;top:479px;width:1px;height:20px;background:#acacac;"></div>
<div style="left:165px;top:498px;width:946px;height:1px;background:#acacac;"></div>
<svg style="left:9px;top:481px" width="16" height="13" viewBox="0 0 16 13">
<rect x="0.5" y="0.5" width="15" height="12" fill="#eef6fc" stroke="#6a6a9a"/>
<rect x="1" y="1" width="14" height="2.5" fill="#9ad68a"/>
<rect x="1" y="1" width="2.5" height="11" fill="#9ad68a"/>
<path d="M1 3.5H15M1 6.5H15M1 9.5H15M3.5 1V12M9.5 1V12" stroke="#6a6a9a" stroke-width="1"/></svg>
<div class="t" style="left:29.8px;top:483.02px;font-size:12.5px;font-weight:normal;color:#222;letter-spacing:0.168px;">ERR319087 (si...</div>
<svg style="left:146px;top:483px" width="10" height="10" viewBox="0 0 10 10"><path d="M1.5 1.5L8.5 8.5M8.5 1.5L1.5 8.5" stroke="#666" stroke-width="1.4"/></svg>
<div style="left:1px;top:502px;width:1107px;height:1px;background:#8696a6;"></div>
<div style="left:1px;top:502px;width:1px;height:228px;background:#8696a6;"></div>
<div style="left:2px;top:503px;width:1106px;height:2px;background:#fafafa;"></div>
<div style="left:1104px;top:503px;width:4px;height:206px;background:#fafafa;"></div>
<div style="left:4px;top:505px;width:1099px;height:37px;background:#ececec;border:1px solid #8696a6;border-top:2px solid #718191;border-left:2px solid #718191;"></div>
<div class="t" style="left:26.6px;top:516.82px;font-size:12.5px;font-weight:normal;color:#222;letter-spacing:0.070px;">Rows: 26</div>
<div class="t" style="left:120.2px;top:516.82px;font-size:12.5px;font-weight:normal;color:#222;letter-spacing:0.243px;">Table view: Genome</div>
<div style="left:406px;top:513px;width:608px;height:18px;background:#ffffff;border:1px solid #7a8a9a;"></div>
<div style="left:1018px;top:510px;width:62px;height:25px;background:#dce8f6;border:1px solid #7a8aa0;background:linear-gradient(180deg,#ffffff,#c6d8ee);"></div>
<div class="t" style="left:1035.5px;top:517.12px;font-size:12.5px;font-weight:normal;color:#222;letter-spacing:-0.096px;">Filter</div>
<svg style="left:1085px;top:516px" width="13" height="12" viewBox="0 0 13 12"><path d="M0.5 1.5H12M0.5 4.5H12" stroke="#333" stroke-width="1.2"/><path d="M2 7H10.5L6.25 11Z" fill="#333"/></svg>
<svg style="left:6px;top:546px" width="1098" height="4"><rect width="1098" height="4" fill="url(#dots)"/></svg>
<div style="left:4px;top:552px;width:1100px;height:117px;background:#ececec;border-top:2px solid #718191;border-left:2px solid #718191;border-right:1px solid #8696a6;border-bottom:1px solid #8696a6;"></div>
<div style="left:6px;top:554px;width:1082px;height:14px;background:#ececec;"></div>
<div style="left:6px;top:568px;width:1082px;height:1px;background:#8696a6;"></div>
<div style="left:1088px;top:554px;width:14px;height:15px;background:#ececec;border-bottom:1px solid #8696a6;"></div>
<div style="left:85px;top:554px;width:1px;height:15px;background:#8a9aaa;"></div>
<div style="left:261px;top:554px;width:1px;height:15px;background:#8a9aaa;"></div>
<div style="left:341px;top:554px;width:1px;height:15px;background:#8a9aaa;"></div>
<div style="left:421px;top:554px;width:1px;height:15px;background:#8a9aaa;"></div>
<div style="left:501px;top:554px;width:1px;height:15px;background:#8a9aaa;"></div>
<div style="left:581px;top:554px;width:1px;height:15px;background:#8a9aaa;"></div>
<div style="left:661px;top:554px;width:1px;height:15px;background:#8a9aaa;"></div>
<div style="left:764px;top:554px;width:1px;height:15px;background:#8a9aaa;"></div>
<div style="left:980px;top:554px;width:1px;height:15px;background:#8a9aaa;"></div>
<div style="left:1060px;top:554px;width:1px;height:15px;background:#8a9aaa;"></div>
<div style="left:1101px;top:554px;width:1px;height:15px;background:#8a9aaa;"></div>
<div class="t" style="left:8.5px;top:556.32px;font-size:12.5px;font-weight:normal;color:#222;letter-spacing:-0.070px;">Chromosome</div>
<div class="t" style="left:155.3px;top:556.32px;font-size:12.5px;font-weight:normal;color:#222;transform:scaleX(0.9640);transform-origin:0 0;">Region</div>
<div class="t" style="left:287.8px;top:556.32px;font-size:12.5px;font-weight:normal;color:#222;letter-spacing:0.430px;">Type</div>
<div class="t" style="left:353.1px;top:556.32px;font-size:12.5px;font-weight:normal;color:#222;letter-spacing:-0.073px;">Reference</div>
<div class="t" style="left:447.1px;top:556.32px;font-size:12.5px;font-weight:normal;color:#222;letter-spacing:-0.136px;">Allele</div>
<div class="t" style="left:505.0px;top:556.32px;font-size:12.5px;font-weight:normal;color:#222;letter-spacing:0.310px;">Reference ...</div>
<div class="t" style="left:603.0px;top:556.32px;font-size:12.5px;font-weight:normal;color:#222;letter-spacing:-0.067px;">Length</div>
<div class="t" style="left:690.4px;top:556.32px;font-size:12.5px;font-weight:normal;color:#222;letter-spacing:0.350px;">Zygosity</div>
<div class="t" style="left:837.9px;top:556.32px;font-size:12.5px;font-weight:normal;color:#222;letter-spacing:0.092px;">Exact match</div>
<div class="t" style="left:981.8px;top:556.32px;font-size:12.5px;font-weight:normal;color:#222;letter-spacing:0.303px;"># start posi...</div>
<div class="t" style="left:1062.6px;top:556.32px;font-size:12.5px;font-weight:normal;color:#222;letter-spacing:0.319px;"># en</div>
<div style="left:6px;top:569px;width:1082px;height:16px;background:#ffffff;"></div>
<div style="left:6px;top:585px;width:1082px;height:16px;background:#efefef;"></div>
<div style="left:6px;top:601px;width:1082px;height:16px;background:#ffffff;"></div>
<div style="left:6px;top:617px;width:1082px;height:16px;background:#bdbdbd;"></div>
<div style="left:6px;top:633px;width:1082px;height:16px;background:#ffffff;"></div>
<div class="t" style="left:8.4px;top:572.12px;font-size:12.5px;font-weight:normal;color:#222;transform:scaleX(1.0500);transform-origin:0 0;">7</div>
<div class="t" style="left:88.4px;top:572.12px;font-size:12.5px;font-weight:normal;color:#222;letter-spacing:1.461px;">55211116^55211117</div>
<div class="t" style="left:264.4px;top:572.12px;font-size:12.5px;font-weight:normal;color:#222;letter-spacing:0.056px;">Insertion</div>
<div style="left:345px;top:578px;width:5px;height:1px;background:#333;"></div>
<div class="t" style="left:424.4px;top:572.12px;font-size:12.5px;font-weight:normal;color:#222;transform:scaleX(1.0500);transform-origin:0 0;">A</div>
<div class="t" style="left:504.4px;top:572.12px;font-size:12.5px;font-weight:normal;color:#222;transform:scaleX(0.9384);transform-origin:0 0;">No</div>
<div class="t" style="left:650.9515625px;top:572.12px;font-size:12.5px;font-weight:normal;color:#222;transform:scaleX(1.1000);transform-origin:0 0;">1</div>
<div class="t" style="left:664.4px;top:572.12px;font-size:12.5px;font-weight:normal;color:#222;letter-spacing:-0.011px;">Heterozygous</div>
<div class="t" style="left:1049.9515625px;top:572.12px;font-size:12.5px;font-weight:normal;color:#222;transform:scaleX(1.1000);transform-origin:0 0;">3</div>
<div class="t" style="left:8.4px;top:588.12px;font-size:12.5px;font-weight:normal;color:#222;transform:scaleX(1.0500);transform-origin:0 0;">7</div>
<div class="t" style="left:88.4px;top:588.12px;font-size:12.5px;font-weight:normal;color:#222;letter-spacing:1.461px;">55211116^55211117</div>
<div class="t" style="left:264.4px;top:588.12px;font-size:12.5px;font-weight:normal;color:#222;letter-spacing:0.056px;">Insertion</div>
<div style="left:345px;top:594px;width:5px;height:1px;background:#333;"></div>
<div class="t" style="left:424.4px;top:588.12px;font-size:12.5px;font-weight:normal;color:#222;transform:scaleX(1.0500);transform-origin:0 0;">T</div>
<div class="t" style="left:504.4px;top:588.12px;font-size:12.5px;font-weight:normal;color:#222;transform:scaleX(0.9384);transform-origin:0 0;">No</div>
<div class="t" style="left:650.9515625px;top:588.12px;font-size:12.5px;font-weight:normal;color:#222;transform:scaleX(1.1000);transform-origin:0 0;">1</div>
<div class="t" style="left:664.4px;top:588.12px;font-size:12.5px;font-weight:normal;color:#222;letter-spacing:-0.011px;">Heterozygous</div>
<div class="t" style="left:1049.9515625px;top:588.12px;font-size:12.5px;font-weight:normal;color:#222;transform:scaleX(1.1000);transform-origin:0 0;">2</div>
<div class="t" style="left:8.4px;top:604.12px;font-size:12.5px;font-weight:normal;color:#222;transform:scaleX(1.0500);transform-origin:0 0;">7</div>
<div class="t" style="left:88.4px;top:604.12px;font-size:12.5px;font-weight:normal;color:#222;letter-spacing:1.081px;">55242512^55242513</div>
<div class="t" style="left:264.4px;top:604.12px;font-size:12.5px;font-weight:normal;color:#222;letter-spacing:0.056px;">Insertion</div>
<div style="left:345px;top:610px;width:5px;height:1px;background:#333;"></div>
<div class="t" style="left:424.4px;top:604.12px;font-size:12.5px;font-weight:normal;color:#222;transform:scaleX(1.0500);transform-origin:0 0;">T</div>
<div class="t" style="left:504.4px;top:604.12px;font-size:12.5px;font-weight:normal;color:#222;transform:scaleX(0.9384);transform-origin:0 0;">No</div>
<div class="t" style="left:650.9515625px;top:604.12px;font-size:12.5px;font-weight:normal;color:#222;transform:scaleX(1.1000);transform-origin:0 0;">1</div>
<div class="t" style="left:664.4px;top:604.12px;font-size:12.5px;font-weight:normal;color:#222;letter-spacing:-0.139px;">Homozygous</div>
<div class="t" style="left:1049.9515625px;top:604.12px;font-size:12.5px;font-weight:normal;color:#222;transform:scaleX(1.1000);transform-origin:0 0;">3</div>
<div class="t" style="left:8.4px;top:620.12px;font-size:12.5px;font-weight:normal;color:#222;transform:scaleX(1.0500);transform-origin:0 0;">7</div>
<div class="t" style="left:88.4px;top:620.12px;font-size:12.5px;font-weight:normal;color:#222;letter-spacing:0.911px;">55249063</div>
<div class="t" style="left:264.4px;top:620.12px;font-size:12.5px;font-weight:normal;color:#222;transform:scaleX(0.8520);transform-origin:0 0;">SNV</div>
<div class="t" style="left:344.4px;top:620.12px;font-size:12.5px;font-weight:normal;color:#222;transform:scaleX(1.0500);transform-origin:0 0;">G</div>
<div class="t" style="left:424.4px;top:620.12px;font-size:12.5px;font-weight:normal;color:#222;transform:scaleX(1.0500);transform-origin:0 0;">A</div>
<div class="t" style="left:504.4px;top:620.12px;font-size:12.5px;font-weight:normal;color:#222;transform:scaleX(0.9384);transform-origin:0 0;">No</div>
<div class="t" style="left:650.9515625px;top:620.12px;font-size:12.5px;font-weight:normal;color:#222;transform:scaleX(1.1000);transform-origin:0 0;">1</div>
<div class="t" style="left:664.4px;top:620.12px;font-size:12.5px;font-weight:normal;color:#222;letter-spacing:-0.139px;">Homozygous</div>
<div class="t" style="left:767.4px;top:620.12px;font-size:12.5px;font-weight:normal;color:#222;letter-spacing:0.293px;">Cosmic_v67, dbsnp_v138</div>
<div class="t" style="left:1043.3px;top:620.12px;font-size:12.5px;font-weight:normal;color:#222;letter-spacing:0.394px;">14</div>
<div class="t" style="left:8.4px;top:636.12px;font-size:12.5px;font-weight:normal;color:#222;transform:scaleX(1.0500);transform-origin:0 0;">7</div>
<div class="t" style="left:88.4px;top:636.12px;font-size:12.5px;font-weight:normal;color:#222;letter-spacing:1.112px;">55249129^55249130</div>
<div class="t" style="left:264.4px;top:636.12px;font-size:12.5px;font-weight:normal;color:#222;letter-spacing:0.056px;">Insertion</div>
<div style="left:345px;top:642px;width:5px;height:1px;background:#333;"></div>
<div class="t" style="left:424.4px;top:636.12px;font-size:12.5px;font-weight:normal;color:#222;transform:scaleX(1.0500);transform-origin:0 0;">A</div>
<div class="t" style="left:504.4px;top:636.12px;font-size:12.5px;font-weight:normal;color:#222;transform:scaleX(0.9384);transform-origin:0 0;">No</div>
<div class="t" style="left:650.9515625px;top:636.12px;font-size:12.5px;font-weight:normal;color:#222;transform:scaleX(1.1000);transform-origin:0 0;">1</div>
<div class="t" style="left:664.4px;top:636.12px;font-size:12.5px;font-weight:normal;color:#222;letter-spacing:-0.011px;">Heterozygous</div>
<div class="t" style="left:1049.9515625px;top:636.12px;font-size:12.5px;font-weight:normal;color:#222;transform:scaleX(1.1000);transform-origin:0 0;">1</div>
<div style="left:6px;top:649px;width:1082px;height:4px;background:#efefef;"></div>
<div style="left:85px;top:569px;width:1px;height:84px;background:#d8d8d8;"></div>
<div style="left:261px;top:569px;width:1px;height:84px;background:#d8d8d8;"></div>
<div style="left:341px;top:569px;width:1px;height:84px;background:#d8d8d8;"></div>
<div style="left:421px;top:569px;width:1px;height:84px;background:#d8d8d8;"></div>
<div style="left:501px;top:569px;width:1px;height:84px;background:#d8d8d8;"></div>
<div style="left:581px;top:569px;width:1px;height:84px;background:#d8d8d8;"></div>
<div style="left:661px;top:569px;width:1px;height:84px;background:#d8d8d8;"></div>
<div style="left:764px;top:569px;width:1px;height:84px;background:#d8d8d8;"></div>
<div style="left:980px;top:569px;width:1px;height:84px;background:#d8d8d8;"></div>
<div style="left:1060px;top:569px;width:1px;height:84px;background:#d8d8d8;"></div>
<div style="left:1087px;top:569px;width:1px;height:84px;background:#8a9aaa;"></div>
<div style="left:1088px;top:569px;width:14px;height:84px;background:#eceef2;"></div>
<div style="left:1088px;top:584px;width:14px;height:54px;background:#e8ecf2;border:1px solid #b4c4dc;"></div>
<div style="left:1088px;top:569px;width:14px;height:15px;background:#ececec;border-bottom:1px solid #a8b0bc;"></div>
<svg style="left:1091px;top:574px" width="8" height="5"><path d="M0 5L4 0L8 5Z" fill="#222"/></svg>
<div style="left:1088px;top:613px;width:14px;height:17px;background:#e6eef8;border:1px solid #6a9ad8;background:linear-gradient(90deg,#c8d8ee,#f4f8fc 40%,#c8d8ee);"></div>
<div style="left:1091px;top:618px;width:9px;height:1px;background:#4a6ab8;"></div>
<div style="left:1091px;top:620px;width:9px;height:1px;background:#4a6ab8;"></div>
<div style="left:1091px;top:622px;width:9px;height:1px;background:#4a6ab8;"></div>
<div style="left:1088px;top:637px;width:14px;height:15px;background:#ececec;border-top:1px solid #a8b0bc;"></div>
<svg style="left:1091px;top:643px" width="8" height="5"><path d="M0 0L4 5L8 0Z" fill="#222"/></svg>
<div style="left:6px;top:653px;width:1082px;height:15px;background:#ececec;border-top:1px solid #b8c0c8;"></div>
<svg style="left:10px;top:656px" width="6" height="10"><path d="M6 0L0 5L6 10Z" fill="#222"/></svg>
<div style="left:21px;top:653px;width:26px;height:15px;background:#e6eef8;border:1px solid #6a9ad8;background:linear-gradient(180deg,#f6f9fd,#c8d8ee);"></div>
<div style="left:32px;top:657px;width:1px;height:7px;background:#4a6ab0;"></div>
<div style="left:34px;top:657px;width:1px;height:7px;background:#4a6ab0;"></div>
<div style="left:36px;top:657px;width:1px;height:7px;background:#4a6ab0;"></div>
<div style="left:1072px;top:653px;width:16px;height:15px;background:#ececec;border-left:1px solid #b8c0c8;"></div>
<svg style="left:1077px;top:656px" width="6" height="10"><path d="M0 0L6 5L0 10Z" fill="#222"/></svg>
<div style="left:1088px;top:653px;width:14px;height:15px;background:#ececec;"></div>
<div style="left:2px;top:670px;width:1102px;height:1px;background:#fafafa;"></div>
<div style="left:447px;top:676px;width:214px;height:26px;background:#dce8f6;border:1px solid #7a8aa0;background:linear-gradient(180deg,#ffffff,#c6d8ee);"></div>
<svg style="left:467px;top:684px" width="12" height="9" viewBox="0 0 12 9"><rect x="0" y="5" width="3" height="3" fill="#2a3ad0"/><rect x="4.5" y="0" width="3" height="8" fill="#2a3ad0"/><rect x="9" y="3" width="3" height="5" fill="#2a3ad0"/></svg>
<div class="t" style="left:484.7px;top:684.22px;font-size:12.5px;font-weight:normal;color:#222;letter-spacing:0.149px;">Create Track from Selection</div>
<div style="left:2px;top:707px;width:1106px;height:2px;background:#fafafa;"></div>
<svg style="left:8px;top:716px" width="12" height="9" viewBox="0 0 12 9"><rect x="0" y="5" width="3" height="3" fill="#2a3ad0"/><rect x="4.5" y="0" width="3" height="8" fill="#2a3ad0"/><rect x="9" y="3" width="3" height="5" fill="#2a3ad0"/></svg>
<svg style="left:24px;top:711px" width="18" height="18" viewBox="0 0 18 18">
<rect x="0.75" y="0.75" width="16.5" height="16.5" fill="#cdc8bc" stroke="#2a62d0" stroke-width="1.5"/>
<rect x="2" y="2.5" width="14" height="12" fill="#66668a"/>
<rect x="2.5" y="3" width="2.5" height="2" fill="#9ae07c"/><rect x="5.5" y="3" width="5" height="2" fill="#9ae07c"/><rect x="11.5" y="3" width="5" height="2" fill="#9ae07c"/><rect x="2.5" y="6" width="2.5" height="2" fill="#9ae07c"/><rect x="5.5" y="6" width="5" height="2" fill="#f2f8ff"/><rect x="11.5" y="6" width="5" height="2" fill="#f2f8ff"/><rect x="2.5" y="9" width="2.5" height="2" fill="#9ae07c"/><rect x="5.5" y="9" width="5" height="2" fill="#f2f8ff"/><rect x="11.5" y="9" width="5" height="2" fill="#f2f8ff"/><rect x="2.5" y="12" width="2.5" height="2" fill="#9ae07c"/><rect x="5.5" y="12" width="5" height="2" fill="#f2f8ff"/><rect x="11.5" y="12" width="5" height="2" fill="#f2f8ff"/></svg>
<svg style="left:47px;top:713px" width="13" height="15" viewBox="0 0 13 15">
<rect x="0.5" y="0.5" width="12" height="14" fill="#f2f8fc" stroke="#3a6aa8"/>
<circle cx="6.5" cy="6" r="3.4" fill="none" stroke="#2a4a7a" stroke-width="1.2"/><path d="M6.5 3.8V6.3H8.5" stroke="#2a4a7a" fill="none"/>
<rect x="2.5" y="11" width="8" height="1" fill="#3a6aa8"/></svg>
<svg style="left:67px;top:713px" width="15" height="15" viewBox="0 0 15 15">
<path d="M0.5 0.5H8L11.5 4V14.5H0.5Z" fill="#f2f8fc" stroke="#3a6aa8"/>
<path d="M5 9.5L8 13.5L13.5 1.5" stroke="#1a9a2a" stroke-width="2" fill="none"/></svg>
</body></html>
